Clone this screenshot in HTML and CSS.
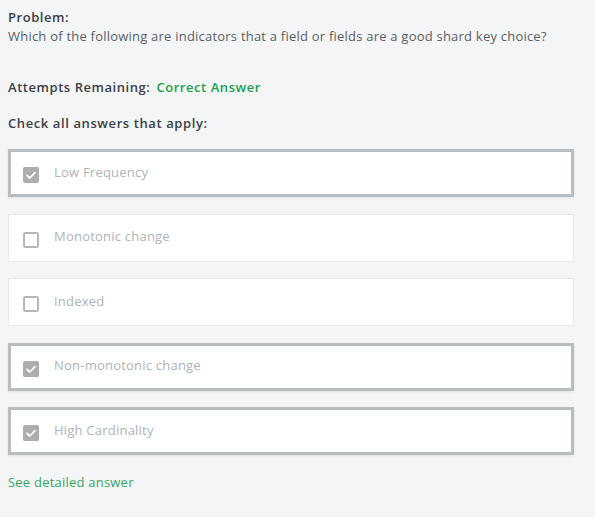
FILE: index.html
```html
<!DOCTYPE html>
<html>
<head>
<meta charset="utf-8">
<link rel="stylesheet" href="styles.css">
</head>
<body>
<div class="page">
  <div class="problem-title">Problem:</div>
  <div class="question">Which of the following are indicators that a field or fields are a good shard key choice?</div>
  <div class="attempts"><span class="label">Attempts Remaining:</span><span class="correct">Correct Answer</span></div>
  <div class="check-all">Check all answers that apply:</div>
  <div class="options">
    <div class="option selected"><span class="box checked"><svg viewBox="0 0 16 16" width="16" height="16"><path d="M4 8.3 L6.8 11 L12 5.6" fill="none" stroke="#fff" stroke-width="1.8" stroke-linecap="round" stroke-linejoin="round"/></svg></span><span class="text">Low Frequency</span></div>
    <div class="option"><span class="box"></span><span class="text">Monotonic change</span></div>
    <div class="option"><span class="box"></span><span class="text">Indexed</span></div>
    <div class="option selected"><span class="box checked"><svg viewBox="0 0 16 16" width="16" height="16"><path d="M4 8.3 L6.8 11 L12 5.6" fill="none" stroke="#fff" stroke-width="1.8" stroke-linecap="round" stroke-linejoin="round"/></svg></span><span class="text">Non-monotonic change</span></div>
    <div class="option selected"><span class="box checked"><svg viewBox="0 0 16 16" width="16" height="16"><path d="M4 8.3 L6.8 11 L12 5.6" fill="none" stroke="#fff" stroke-width="1.8" stroke-linecap="round" stroke-linejoin="round"/></svg></span><span class="text">High Cardinality</span></div>
  </div>
  <div class="detail">See detailed answer</div>
</div>
</body>
</html>
```
FILE: styles.css
```css
html, body {
  margin: 0;
  padding: 0;
  background: #f4f5f7;
}
body {
  font-family: "Open Sans", "Liberation Sans", Arial, sans-serif;
  font-size: 13px;
  color: #555b61;
  letter-spacing: 0.22px;
}
.page {
  padding: 9px 20px 0 8px;
}
.problem-title {
  font-weight: 600;
  color: #3b4046;
  line-height: 16px;
  letter-spacing: 0.55px;
}
.question {
  margin-top: 2px;
  line-height: 18px;
  color: #5a5f64;
}
.attempts {
  margin-top: 33px;
  line-height: 18px;
  display: flex;
  gap: 6px;
  font-weight: 600;
  letter-spacing: 0.55px;
}
.attempts .label {
  color: #3b4046;
}
.attempts .correct {
  color: #21a04b;
}
.check-all {
  margin-top: 18px;
  font-weight: 600;
  color: #3b4046;
  line-height: 18px;
  letter-spacing: 0.6px;
}
.options {
  margin-top: 17px;
  display: flex;
  flex-direction: column;
  gap: 16.5px;
}
.option {
  height: 48px;
  box-sizing: border-box;
  background: #fff;
  border: 1px solid #e6e8ea;
  display: flex;
  align-items: center;
  padding-left: 14px;
  margin-right: 1px;
}
.option.selected {
  border: 3px solid #b8bdc1;
  padding-left: 12px;
  box-shadow: 0 1px 3px rgba(0,0,0,0.08);
}
.box {
  width: 16px;
  height: 16px;
  box-sizing: border-box;
  border: 2px solid #b4b8bc;
  border-radius: 2px;
  margin-top: 4px;
  display: flex;
}
.box.checked {
  border: none;
  background: #a9aeb3;
}
.text {
  margin-left: 15px;
  color: #aeb3b8;
  line-height: 16px;
  margin-bottom: 3px;
}
.detail {
  margin-top: 19px;
  color: #3aa55c;
  line-height: 16px;
}
```
